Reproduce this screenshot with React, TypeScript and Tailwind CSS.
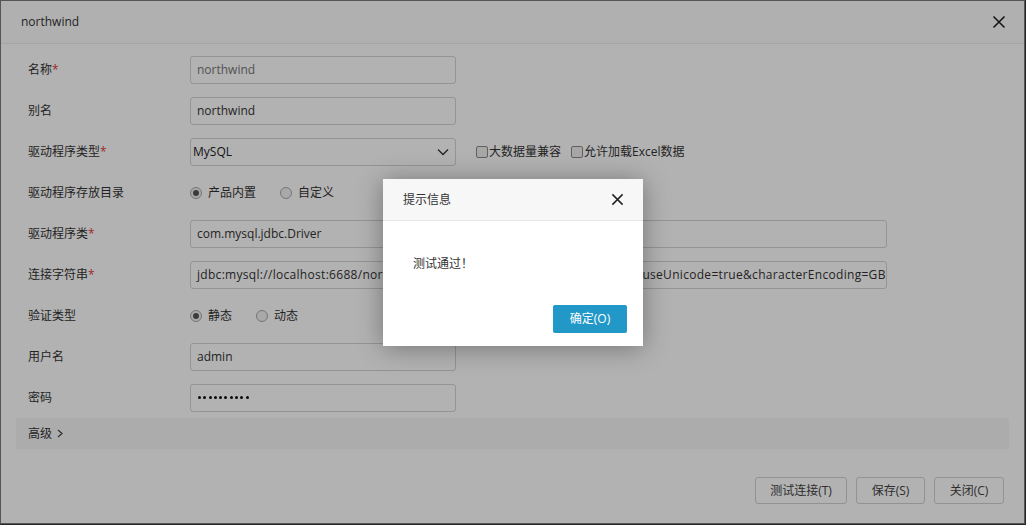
import React from "react";

const Star = () => <span className="text-[#e53935]">*</span>;

function Row({ label, req, children }: { label: string; req?: boolean; children: React.ReactNode }) {
  return (
    <div className="flex h-[41px] items-center">
      <div className="w-[162px] text-[12px] text-[#333]">
        {label}
        {req && <Star />}
      </div>
      {children}
    </div>
  );
}

function Input({ value, wide, muted, spaced }: { value: string; wide?: boolean; muted?: boolean; spaced?: boolean }) {
  return (
    <div
      className={`flex h-[28px] items-center overflow-hidden whitespace-nowrap rounded-[3px] border border-[#d4d4d4] bg-white px-[6px] text-[12px] ${
        wide ? "w-[697px]" : "w-[266px]"
      } ${muted ? "text-[#777]" : "text-[#333]"} ${spaced ? "tracking-[0.3px]" : ""}`}
    >
      {value}
    </div>
  );
}

function Radio({ label, checked }: { label: string; checked?: boolean }) {
  return (
    <div className="mr-[24px] flex items-center gap-[6px] text-[12px] text-[#333]">
      <span className="flex h-[12px] w-[12px] items-center justify-center rounded-full border border-[#a8a8a8] bg-[#f2f2f2]">
        {checked && <span className="h-[6px] w-[6px] rounded-full bg-[#555]" />}
      </span>
      {label}
    </div>
  );
}

function Check({ label }: { label: string }) {
  return (
    <div className="mr-[10px] flex items-center text-[12px] text-[#333]">
      <span className="mr-[1px] h-[12px] w-[12px] rounded-[2px] border border-[#8a8a8a] bg-[#f0f0f0]" />
      {label}
    </div>
  );
}

function XIcon({ size = 14, color = "#333" }: { size?: number; color?: string }) {
  return (
    <svg width={size} height={size} viewBox="0 0 14 14">
      <path d="M1.5 1.5 L12.5 12.5 M12.5 1.5 L1.5 12.5" stroke={color} strokeWidth="1.6" />
    </svg>
  );
}

function Btn({ children, w }: { children: React.ReactNode; w: string }) {
  return (
    <div className={`flex h-[27px] items-center justify-center rounded-[3px] border border-[#d2d2d2] bg-white text-[12px] text-[#444] ${w}`}>
      {children}
    </div>
  );
}

const dots = Array.from({ length: 10 });

export default function App() {
  return (
    <div className="relative h-[525px] w-[1026px] overflow-hidden bg-[#3a3a3a] font-['Open_Sans','Noto_Sans_CJK_SC',sans-serif]">
      <div className="flex h-[524px] w-[1025px] flex-col border border-[#7a7a7a] bg-white">
        <div className="flex h-[43px] shrink-0 items-center justify-between border-b border-[#ececec] bg-[#fcfcfc] pl-[20px] pr-[18px]">
          <span className="text-[12px] text-[#333]">northwind</span>
          <XIcon size={14} color="#222" />
        </div>
        <div className="flex flex-col pl-[27px] pt-[5px]">
          <Row label="名称" req>
            <Input value="northwind" muted />
          </Row>
          <Row label="别名">
            <Input value="northwind" />
          </Row>
          <Row label="驱动程序类型" req>
            <div className="flex h-[28px] w-[266px] items-center justify-between rounded-[3px] border border-[#d4d4d4] bg-white pl-[2px] pr-[6px] text-[12px] text-[#222]">
              <span>MySQL</span>
              <svg width="12" height="8" viewBox="0 0 12 8">
                <path d="M1 1.5 L6 6.5 L11 1.5" fill="none" stroke="#333" strokeWidth="1.3" />
              </svg>
            </div>
            <div className="ml-[20px] flex items-center">
              <Check label="大数据量兼容" />
              <Check label="允许加载Excel数据" />
            </div>
          </Row>
          <Row label="驱动程序存放目录">
            <Radio label="产品内置" checked />
            <Radio label="自定义" />
          </Row>
          <Row label="驱动程序类" req>
            <Input value="com.mysql.jdbc.Driver" wide />
          </Row>
          <Row label="连接字符串" req>
            <Input
              value="jdbc:mysql://localhost:6688/northwind?autoReconnect=true&useSSL=false&useUnicode=true&characterEncoding=GBK"
              wide
              spaced
            />
          </Row>
          <Row label="验证类型">
            <Radio label="静态" checked />
            <Radio label="动态" />
          </Row>
          <Row label="用户名">
            <Input value="admin" />
          </Row>
          <Row label="密码">
            <div className="flex h-[28px] w-[266px] items-center gap-[2.3px] rounded-[3px] border border-[#d4d4d4] bg-white px-[7px]">
              {dots.map((_, i) => (
                <span key={i} className="h-[3px] w-[3px] rounded-full bg-[#111]" />
              ))}
            </div>
          </Row>
        </div>
        <div className="mx-[15px] flex h-[31px] items-center bg-[#f7f7f7] pl-[12px] text-[12px] text-[#333]">
          高级
          <svg className="ml-[5px]" width="6" height="9" viewBox="0 0 6 9">
            <path d="M1 1 L5 4.5 L1 8" fill="none" stroke="#444" strokeWidth="1.2" />
          </svg>
        </div>
        <div className="mt-[28px] flex justify-end gap-[9px] pr-[20px]">
          <Btn w="w-[92px]">测试连接(T)</Btn>
          <Btn w="w-[69px]">保存(S)</Btn>
          <Btn w="w-[70px]">关闭(C)</Btn>
        </div>
      </div>

      <div className="absolute inset-0 bg-black/30" />

      <div className="absolute left-[383px] top-[179px] flex h-[167px] w-[260px] flex-col bg-white shadow-[0_2px_24px_rgba(0,0,0,0.35)]">
        <div className="flex h-[42px] shrink-0 items-center justify-between border-b border-[#e6e6e6] bg-[#f7f7f7] pl-[20px] pr-[19px]">
          <span className="text-[12px] text-[#333]">提示信息</span>
          <XIcon size={13} color="#222" />
        </div>
        <div className="pl-[30px] pt-[34px] text-[12px] text-[#333]">测试通过！</div>
        <div className="mt-auto flex justify-end pb-[13px] pr-[16px]">
          <div className="flex h-[28px] w-[74px] items-center justify-center rounded-[2px] bg-[#2298c8] text-[12px] text-white">
            确定(O)
          </div>
        </div>
      </div>
    </div>
  );
}
